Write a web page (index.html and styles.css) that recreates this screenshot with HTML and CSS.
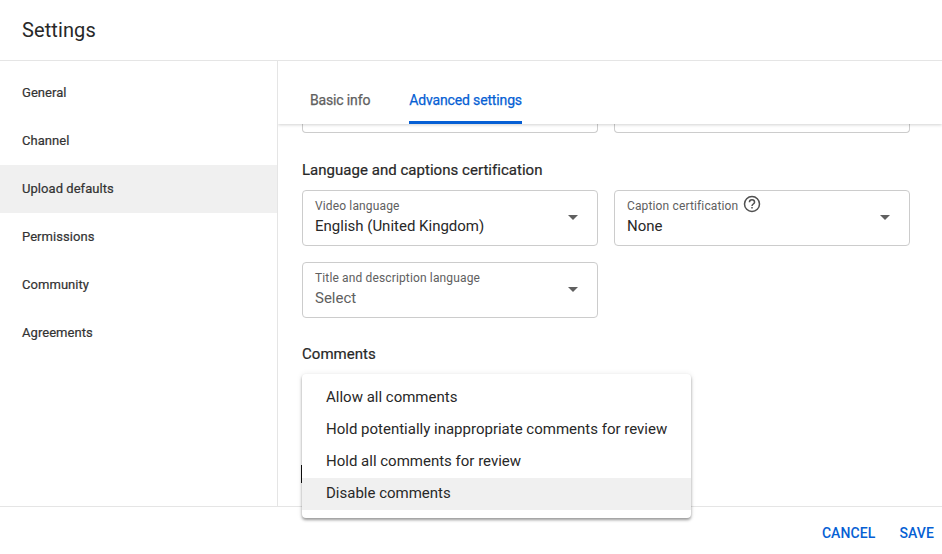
FILE: index.html
```html
<!DOCTYPE html>
<html lang="en">
  <head>
    <meta charset="UTF-8" />
    <meta name="viewport" content="width=device-width, initial-scale=1.0" />
    <title>Settings</title>
    <link rel="stylesheet" href="styles.css">
  </head>
  <body>
    <div class="dialog">
      <div class="dialog--header">Settings</div>

      <div class="dialog--body">
        <div class="sidebar">
          <div class="sidebar--item">General</div>
          <div class="sidebar--item">Channel</div>
          <div class="sidebar--item active">Upload defaults</div>
          <div class="sidebar--item">Permissions</div>
          <div class="sidebar--item">Community</div>
          <div class="sidebar--item">Agreements</div>
        </div>

        <div class="main">
          <div class="tabs">
            <div class="tab">Basic info</div>
            <div class="tab selected">Advanced settings</div>
          </div>

          <div class="content">
            <div class="row">
              <div class="cut--field"></div>
              <div class="cut--field"></div>
            </div>

            <h2 class="section--title first">Language and captions certification</h2>
            <div class="row">
              <div class="field">
                <div class="field--text">
                  <span class="field--label">Video language</span>
                  <span class="field--value">English (United Kingdom)</span>
                </div>
                <span class="arrow"></span>
              </div>
              <div class="field">
                <div class="field--text">
                  <span class="field--label">
                    Caption certification
                    <svg class="help" viewBox="0 0 24 24" width="18" height="18">
                      <circle cx="12" cy="12" r="10" fill="none" stroke="#505050" stroke-width="2" />
                      <path d="M8.6 9.6a3.4 3.4 0 0 1 6.8 0c0 2.3-3.4 2.6-3.4 5" fill="none" stroke="#505050" stroke-width="2" />
                      <rect x="11" y="16" width="2" height="2" fill="#505050" />
                    </svg>
                  </span>
                  <span class="field--value">None</span>
                </div>
                <span class="arrow"></span>
              </div>
            </div>
            <div class="row second">
              <div class="field">
                <div class="field--text">
                  <span class="field--label">Title and description language</span>
                  <span class="field--value muted">Select</span>
                </div>
                <span class="arrow"></span>
              </div>
            </div>

            <h2 class="section--title comments">Comments</h2>
            <div class="comment--mark"></div>
          </div>
        </div>
      </div>

      <div class="dialog--footer">
        <a class="footer--btn">CANCEL</a>
        <a class="footer--btn">SAVE</a>
      </div>

      <div class="menu">
        <div class="menu--item">Allow all comments</div>
        <div class="menu--item">Hold potentially inappropriate comments for review</div>
        <div class="menu--item">Hold all comments for review</div>
        <div class="menu--item hover">Disable comments</div>
      </div>
    </div>
  </body>
</html>
```

FILE: styles.css
```css
* {
  box-sizing: border-box;
  padding: 0;
  margin: 0;
  font-family: Roboto, "Liberation Sans", sans-serif;
}
body {
  background-color: #fff;
  overflow: hidden;
}
.dialog {
  position: relative;
  display: flex;
  flex-direction: column;
  width: 942px;
  height: 554px;
  color: #282828;
}
.dialog--header {
  height: 61px;
  padding: 17px 22px 0;
  font-size: 20px;
  line-height: 26px;
  letter-spacing: 0.1px;
  border-bottom: 1px solid #e5e5e5;
}
.dialog--body {
  display: flex;
  height: 445px;
}
.dialog--footer {
  display: flex;
  justify-content: flex-end;
  gap: 24px;
  height: 48px;
  padding: 17px 8px 0 0;
  border-top: 1px solid #e5e5e5;
}
.footer--btn {
  font-size: 14px;
  font-weight: 500;
  line-height: 18px;
  letter-spacing: 0.1px;
  color: #065fd4;
}

/* left nav */
.sidebar {
  width: 278px;
  padding-top: 8px;
  border-right: 1px solid #e5e5e5;
}
.sidebar--item {
  height: 48px;
  padding-left: 22px;
  font-size: 13px;
  font-weight: 400;
  line-height: 47px;
  letter-spacing: 0.05px;
  color: #333;
  -webkit-text-stroke: 0.2px #333;
}
.sidebar--item.active {
  background-color: #f0f0f0;
}

/* tabs */
.main {
  display: flex;
  flex-direction: column;
  flex: 1;
  overflow: hidden;
}
.tabs {
  position: relative;
  display: flex;
  gap: 39px;
  height: 63px;
  padding-left: 32px;
  background-color: #fff;
  box-shadow: 0 1px 3px rgba(0, 0, 0, 0.18);
}
.tab {
  height: 63px;
  padding-top: 30px;
  font-size: 14px;
  font-weight: 400;
  line-height: 18px;
  letter-spacing: -0.15px;
  color: #606060;
  -webkit-text-stroke: 0.25px #606060;
}
.tab.selected {
  color: #065fd4;
  -webkit-text-stroke: 0.25px #065fd4;
  border-bottom: 3px solid #065fd4;
  border-radius: 2px 2px 0 0;
}

/* form */
.content {
  flex: 1;
  padding-left: 24px;
}
.row {
  display: flex;
  gap: 16px;
}
.row.second {
  margin-top: 16px;
}
.cut--field {
  width: 296px;
  height: 9px;
  border: 1px solid #ccc;
  border-top: none;
  border-radius: 0 0 4px 4px;
}
.section--title {
  font-size: 15px;
  font-weight: 400;
  line-height: 20px;
  letter-spacing: 0.03px;
  -webkit-text-stroke: 0.2px #282828;
}
.section--title.first {
  margin: 27px 0 10px;
}
.section--title.comments {
  margin-top: 26px;
}
.comment--mark {
  width: 1px;
  height: 18px;
  margin: 101px 0 0 -1px;
  background-color: #111;
}
.field {
  display: flex;
  align-items: center;
  justify-content: space-between;
  width: 296px;
  height: 56px;
  padding: 0 19px 0 12px;
  border: 1px solid #ccc;
  border-radius: 4px;
}
.field--text {
  display: flex;
  flex-direction: column;
  margin-top: -3px;
}
.field--label {
  display: flex;
  align-items: center;
  gap: 5px;
  height: 17px;
  font-size: 12px;
  letter-spacing: 0.14px;
  color: #606060;
}
.field--value {
  margin-top: 1px;
  font-size: 15px;
  line-height: 20px;
  color: #282828;
}
.field--value.muted {
  color: #606060;
}
.help {
  margin-top: -4px;
}
.arrow {
  width: 0;
  height: 0;
  margin-top: -2px;
  border-left: 5px solid transparent;
  border-right: 5px solid transparent;
  border-top: 5px solid #606060;
}

/* dropdown that lies over the form */
.menu {
  position: absolute;
  left: 302px;
  top: 374px;
  width: 389px;
  height: 144px;
  padding: 8px 0;
  background-color: #fff;
  border-radius: 4px;
  box-shadow: 0 2px 3px rgba(0, 0, 0, 0.38), 0 0 6px rgba(0, 0, 0, 0.08);
}
.menu--item {
  height: 32px;
  padding-left: 24px;
  font-size: 15px;
  line-height: 30px;
  color: #282828;
}
.menu--item.hover {
  background-color: #f0f0f0;
}
```
